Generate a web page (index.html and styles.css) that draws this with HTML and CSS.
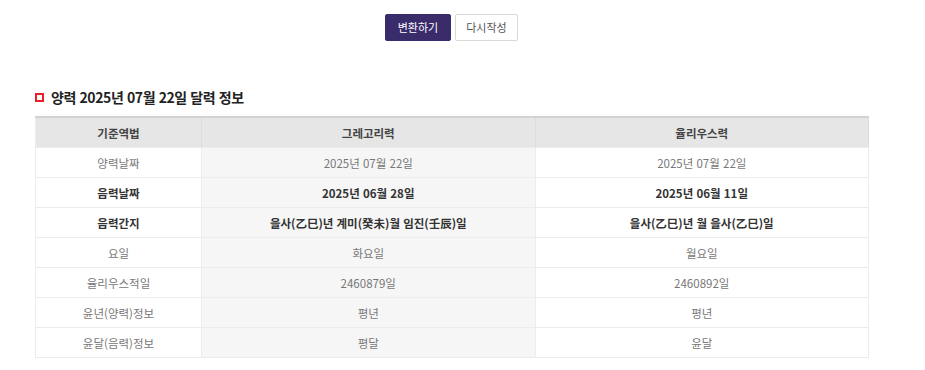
FILE: index.html
```html
<!DOCTYPE html>
<html lang="ko">
<head>
<meta charset="utf-8">
<link rel="stylesheet" href="styles.css">
</head>
<body>
<div class="actions">
  <button class="btn btn-primary">변환하기</button>
  <button class="btn btn-default">다시작성</button>
</div>
<section class="result">
  <h3 class="title"><span class="bullet"></span>양력 2025년 07월 22일 달력 정보</h3>
  <table class="cal">
    <thead>
      <tr><th>기준역법</th><th>그레고리력</th><th>율리우스력</th></tr>
    </thead>
    <tbody>
      <tr><td>양력날짜</td><td>2025년 07월 22일</td><td>2025년 07월 22일</td></tr>
      <tr class="strong"><td>음력날짜</td><td>2025년 06월 28일</td><td>2025년 06월 11일</td></tr>
      <tr class="strong"><td>음력간지</td><td>을사(乙巳)년 계미(癸未)월 임진(壬辰)일</td><td>을사(乙巳)년 월 을사(乙巳)일</td></tr>
      <tr><td>요일</td><td>화요일</td><td>월요일</td></tr>
      <tr><td>율리우스적일</td><td>2460879일</td><td>2460892일</td></tr>
      <tr><td>윤년(양력)정보</td><td>평년</td><td>평년</td></tr>
      <tr><td>윤달(음력)정보</td><td>평달</td><td>윤달</td></tr>
    </tbody>
  </table>
</section>
</body>
</html>
```
FILE: styles.css
```css
html, body {
  margin: 0;
  padding: 0;
  background: #fff;
  font-family: "Noto Sans CJK KR", "Noto Sans", sans-serif;
  color: #333;
}
.actions {
  display: flex;
  justify-content: center;
  gap: 4px;
  padding: 14px 22px 0 0;
}
.btn {
  box-sizing: border-box;
  height: 27px;
  padding: 0;
  font-family: inherit;
  font-size: 11px;
  border-radius: 2px;
  cursor: pointer;
  line-height: 25px;
  white-space: nowrap;
}
.btn-primary {
  background: #3a2b6b;
  border: 1px solid #3a2b6b;
  color: #fff;
  width: 66px;
}
.btn-default {
  background: #fff;
  border: 1px solid #d9d9d9;
  color: #555;
  width: 63px;
}
.result {
  padding: 46px 0 0 35px;
  width: 834px;
}
.title {
  display: flex;
  align-items: center;
  gap: 7px;
  margin: 0 0 9px 0;
  font-size: 14px;
  font-weight: 700;
  letter-spacing: -0.4px;
  color: #222;
  line-height: 20px;
}
.bullet {
  width: 5px;
  height: 5px;
  border: 2px solid #e8202a;
  background: #fff;
  flex: none;
}
.cal {
  width: 834px;
  border-collapse: collapse;
  table-layout: fixed;
  border-top: 2px solid #d2d2d2;
  border-left: 1px solid #ececec;
  border-bottom: 1px solid #ececec;
  font-size: 11.5px;
}
.cal th, .cal td {
  height: 29px;
  padding: 0;
  text-align: center;
  border-bottom: 1px solid #ececec;
  border-right: 1px solid #ececec;
}
.cal th {
  background: #e6e6e6;
  color: #444;
  font-weight: 700;
  border-right-color: #dcdcdc;
}
.cal th:nth-child(1), .cal td:nth-child(1) { width: 165px; }
.cal td {
  color: #777;
  background: #fff;
}
.cal td:nth-child(2) {
  background: #f6f6f6;
}
.cal tr.strong td {
  color: #333;
  font-weight: 700;
}
```
